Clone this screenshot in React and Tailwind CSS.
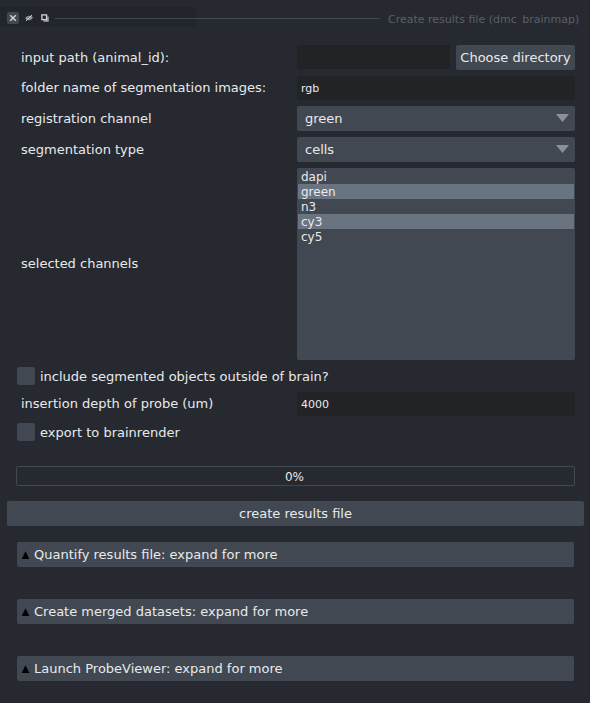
import React from "react";

const FONT = "font-['DejaVu_Sans',sans-serif]";

function Label({ children, className = "" }) {
  return <div className={`w-[280px] shrink-0 pl-1 leading-[15px] ${className}`}>{children}</div>;
}

function TextField({ value, className = "" }) {
  return (
    <div className={`flex h-6 items-center rounded-[2px] bg-[#222327] pl-1 text-[11px] ${className}`}>
      {value}
    </div>
  );
}

function Select({ value }) {
  return (
    <div className="flex h-[25px] flex-1 items-center justify-between rounded-[2px] bg-[#414851] pr-[6px] pl-2">
      <span>{value}</span>
      <svg width="13" height="8" viewBox="0 0 13 8" className="mb-[2px]">
        <path d="M0 0H13L6.5 8Z" fill="#8f9095" />
      </svg>
    </div>
  );
}

function CheckRow({ children, className = "" }) {
  return (
    <div className={`flex h-[18px] items-center gap-[5px] ${className}`}>
      <span className="size-[18px] rounded-[2px] bg-[#414851]" />
      <span>{children}</span>
    </div>
  );
}

function Expander({ children }) {
  return (
    <div className="flex h-[25px] items-center rounded-[2px] bg-[#414851] pl-[4px]">
      <svg width="9" height="8" viewBox="0 0 9 8" className="mt-px mr-1">
        <path d="M4.5 0.2L8.4 8H0.6Z" fill="#000" />
      </svg>
      <span>{children}</span>
    </div>
  );
}

function TitleBar() {
  return (
    <div className="flex h-[27px] pt-[7px]">
      <div className="flex h-5 w-[196px] shrink-0 items-center bg-[#22252b] pt-[2px] pl-[7px]">
        <span className="flex size-3 items-center justify-center rounded-[2px] bg-[#414851]">
          <svg width="8" height="8" viewBox="0 0 8 8">
            <path d="M1.2 1.2L6.8 6.8M6.8 1.2L1.2 6.8" stroke="#d0d2d5" strokeWidth="1.5" />
          </svg>
        </span>
        <svg width="8" height="8" viewBox="0 0 8 8" className="ml-[6px]">
          <path d="M0.2 4.6C1.2 1.6 5.8 0.8 7.8 3.4C6.6 6.6 2.2 7.2 0.2 4.6Z" fill="#94979b" />
          <circle cx="4" cy="4" r="1.2" fill="#6d7177" />
          <path d="M1 6.8L7 1.1" stroke="#d0d2d5" strokeWidth="1" />
        </svg>
        <svg width="8" height="8" viewBox="0 0 8 8" className="ml-2">
          <path d="M2.5 7H7V2.5" fill="none" stroke="#a9acb0" strokeWidth="1.4" />
          <rect x="0.9" y="0.9" width="4.7" height="4.7" fill="#22252b" stroke="#d6d8da" strokeWidth="1.3" />
        </svg>
        <span className="mt-px ml-[6px] h-px flex-1 bg-[#414851]" />
      </div>
      <div className="mt-[11px] h-px w-[184px] shrink-0 bg-[#414851]" />
      <div className="mt-[6px] ml-2 h-[13px] text-[11px] leading-[13px] whitespace-nowrap text-[#595f67] [clip-path:inset(0_0_1px_0)]">
        Create results file (dmc_brainmap)
      </div>
    </div>
  );
}

export default function App() {
  const channels = [
    ["dapi", false],
    ["green", true],
    ["n3", false],
    ["cy3", true],
    ["cy5", false],
  ];
  return (
    <div className={`h-[703px] w-[590px] overflow-hidden bg-[#262930] text-[13px] leading-[15px] text-[#e9eaeb] ${FONT}`}>
      <TitleBar />
      <div className="mt-[18px] flex flex-col gap-[6px] pr-[15px] pl-[17px]">
        <div className="flex h-[25px] items-center">
          <Label>input path (animal_id):</Label>
          <TextField value="" className="mb-px w-[153px]" />
          <div className="ml-[6px] flex h-[25px] flex-1 items-center justify-center rounded-[2px] bg-[#414851] whitespace-nowrap">
            Choose directory
          </div>
        </div>
        <div className="flex h-6 items-center">
          <Label className="pb-[2px]">folder name of segmentation images:</Label>
          <TextField value="rgb" className="flex-1" />
        </div>
        <div className="flex items-center">
          <Label>registration channel</Label>
          <Select value="green" />
        </div>
        <div className="flex items-center">
          <Label>segmentation type</Label>
          <Select value="cells" />
        </div>
        <div className="flex items-center">
          <Label className="pb-[2px]">selected channels</Label>
          <div className="h-[192px] flex-1 rounded-[2px] bg-[#414851] p-px text-[12px]">
            {channels.map(([name, selected]) => (
              <div key={name} className={`h-[15px] pl-[3px] leading-[17px] ${selected ? "bg-[#6a7380]" : ""}`}>
                {name}
              </div>
            ))}
          </div>
        </div>
        <CheckRow className="mt-px">include segmented objects outside of brain?</CheckRow>
        <div className="mt-px flex items-center">
          <Label className="pb-[2px]">insertion depth of probe (um)</Label>
          <TextField value="4000" className="flex-1" />
        </div>
        <CheckRow className="mt-px">export to brainrender</CheckRow>
      </div>
      <div className="mt-[25px] mr-[15px] ml-4 flex h-5 items-center justify-center rounded-[2px] border border-[#414851] pt-[2px] pr-[2px] text-[12px]">
        0%
      </div>
      <div className="mt-[15px] mr-[6px] ml-[7px] flex h-[25px] items-center justify-center rounded-[2px] bg-[#414851]">
        create results file
      </div>
      <div className="mt-4 mr-4 ml-[17px] flex flex-col gap-8">
        <Expander>Quantify results file: expand for more</Expander>
        <Expander>Create merged datasets: expand for more</Expander>
        <Expander>Launch ProbeViewer: expand for more</Expander>
      </div>
    </div>
  );
}
